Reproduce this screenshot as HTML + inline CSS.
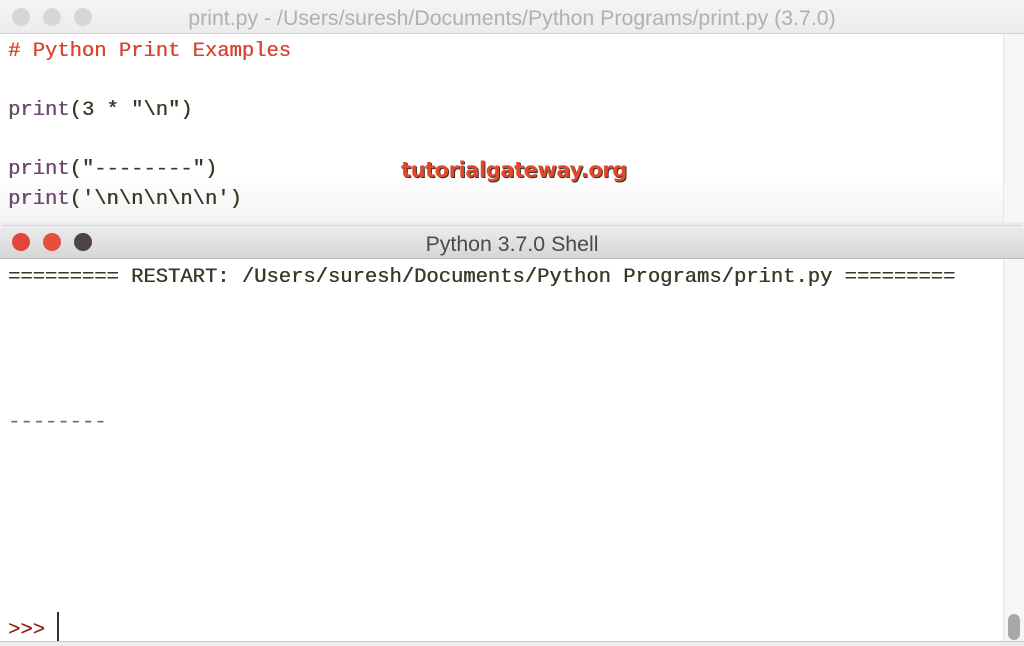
<!DOCTYPE html>
<html><head><meta charset="utf-8"><style>
*{margin:0;padding:0;box-sizing:border-box}
body{width:1024px;height:646px;overflow:hidden;background:#fff;position:relative;font-family:"Liberation Mono",monospace}
.tb{position:absolute;left:0;width:1024px;background:linear-gradient(#f4f4f4,#ececec);border-bottom:1px solid #d4d4d4;font-family:"Liberation Sans",sans-serif;font-size:21.3px;text-align:center}
.dot{position:absolute;width:18px;height:18px;border-radius:50%}
.code{position:absolute;left:8px;font-size:20.5px;line-height:29.5px;white-space:pre;letter-spacing:0;text-shadow:0.4px 0 0 currentColor}
.p{color:#6c4a6e}.s{color:#353a24}.c{color:#d8442f}
</style></head><body>
<div class="tb" style="top:0;height:34px;line-height:36px;color:#b0b0b0">print.py - /Users/suresh/Documents/Python Programs/print.py (3.7.0)
<div class="dot" style="left:12px;top:8px;background:#d6d6d6"></div>
<div class="dot" style="left:43px;top:8px;background:#d6d6d6"></div>
<div class="dot" style="left:74px;top:8px;background:#d6d6d6"></div>
</div>
<div style="position:absolute;left:0;top:34px;width:1003px;height:190px;background:linear-gradient(#fff 0,#fff 140px,#f3f3f3 190px)"></div>
<div style="position:absolute;left:1003px;top:34px;width:21px;height:190px;background:#f6f6f6;border-left:1px solid #e6e6e6"></div>
<div class="code" style="top:37px"><span class="c"># Python Print Examples</span>

<span class="p">print</span><span class="s">(3 * "\n")</span>

<span class="p">print</span><span class="s">("--------")</span>
<span class="p">print</span><span class="s">('\n\n\n\n\n')</span></div>
<div style="position:absolute;left:401px;top:158px;font-family:'DejaVu Sans',sans-serif;font-weight:bold;font-size:21px;color:#e04a2a;text-shadow:1px 1px 0 #333;letter-spacing:-0.45px">tutorialgateway.org</div>
<div style="position:absolute;left:0;top:222px;width:1024px;height:4px;background:#ececec"></div>
<div class="tb" style="top:225px;height:34px;line-height:36px;color:#4a4a4a;border-top:1px solid #d8d8d8;border-radius:5px 5px 0 0;background:linear-gradient(#ececec,#d6d6d6);border-bottom:1px solid #b8b8b8">Python 3.7.0 Shell
<div class="dot" style="left:12px;top:7px;background:#e2463a"></div>
<div class="dot" style="left:43px;top:7px;background:#e4503d"></div>
<div class="dot" style="left:74px;top:7px;background:#4e4448"></div>
</div>
<div style="position:absolute;left:1003px;top:259px;width:21px;height:382px;background:#f6f6f6;border-left:1px solid #e6e6e6"></div>
<div style="position:absolute;left:1008px;top:614px;width:12px;height:26px;border-radius:6px;background:#a8a8a8"></div>
<div class="code s" style="top:263px;line-height:29px">========= RESTART: /Users/suresh/Documents/Python Programs/print.py =========</div>
<div class="code" style="top:408px;color:#77647a">--------</div>
<div class="code" style="top:616px;color:#9a1a12">&gt;&gt;&gt; </div>
<div style="position:absolute;left:57px;top:612px;width:2px;height:29px;background:#3a2a2a"></div>
<div style="position:absolute;left:0;top:641px;width:1024px;height:5px;background:#ececec;border-top:1px solid #c8c8c8"></div>
</body></html>
